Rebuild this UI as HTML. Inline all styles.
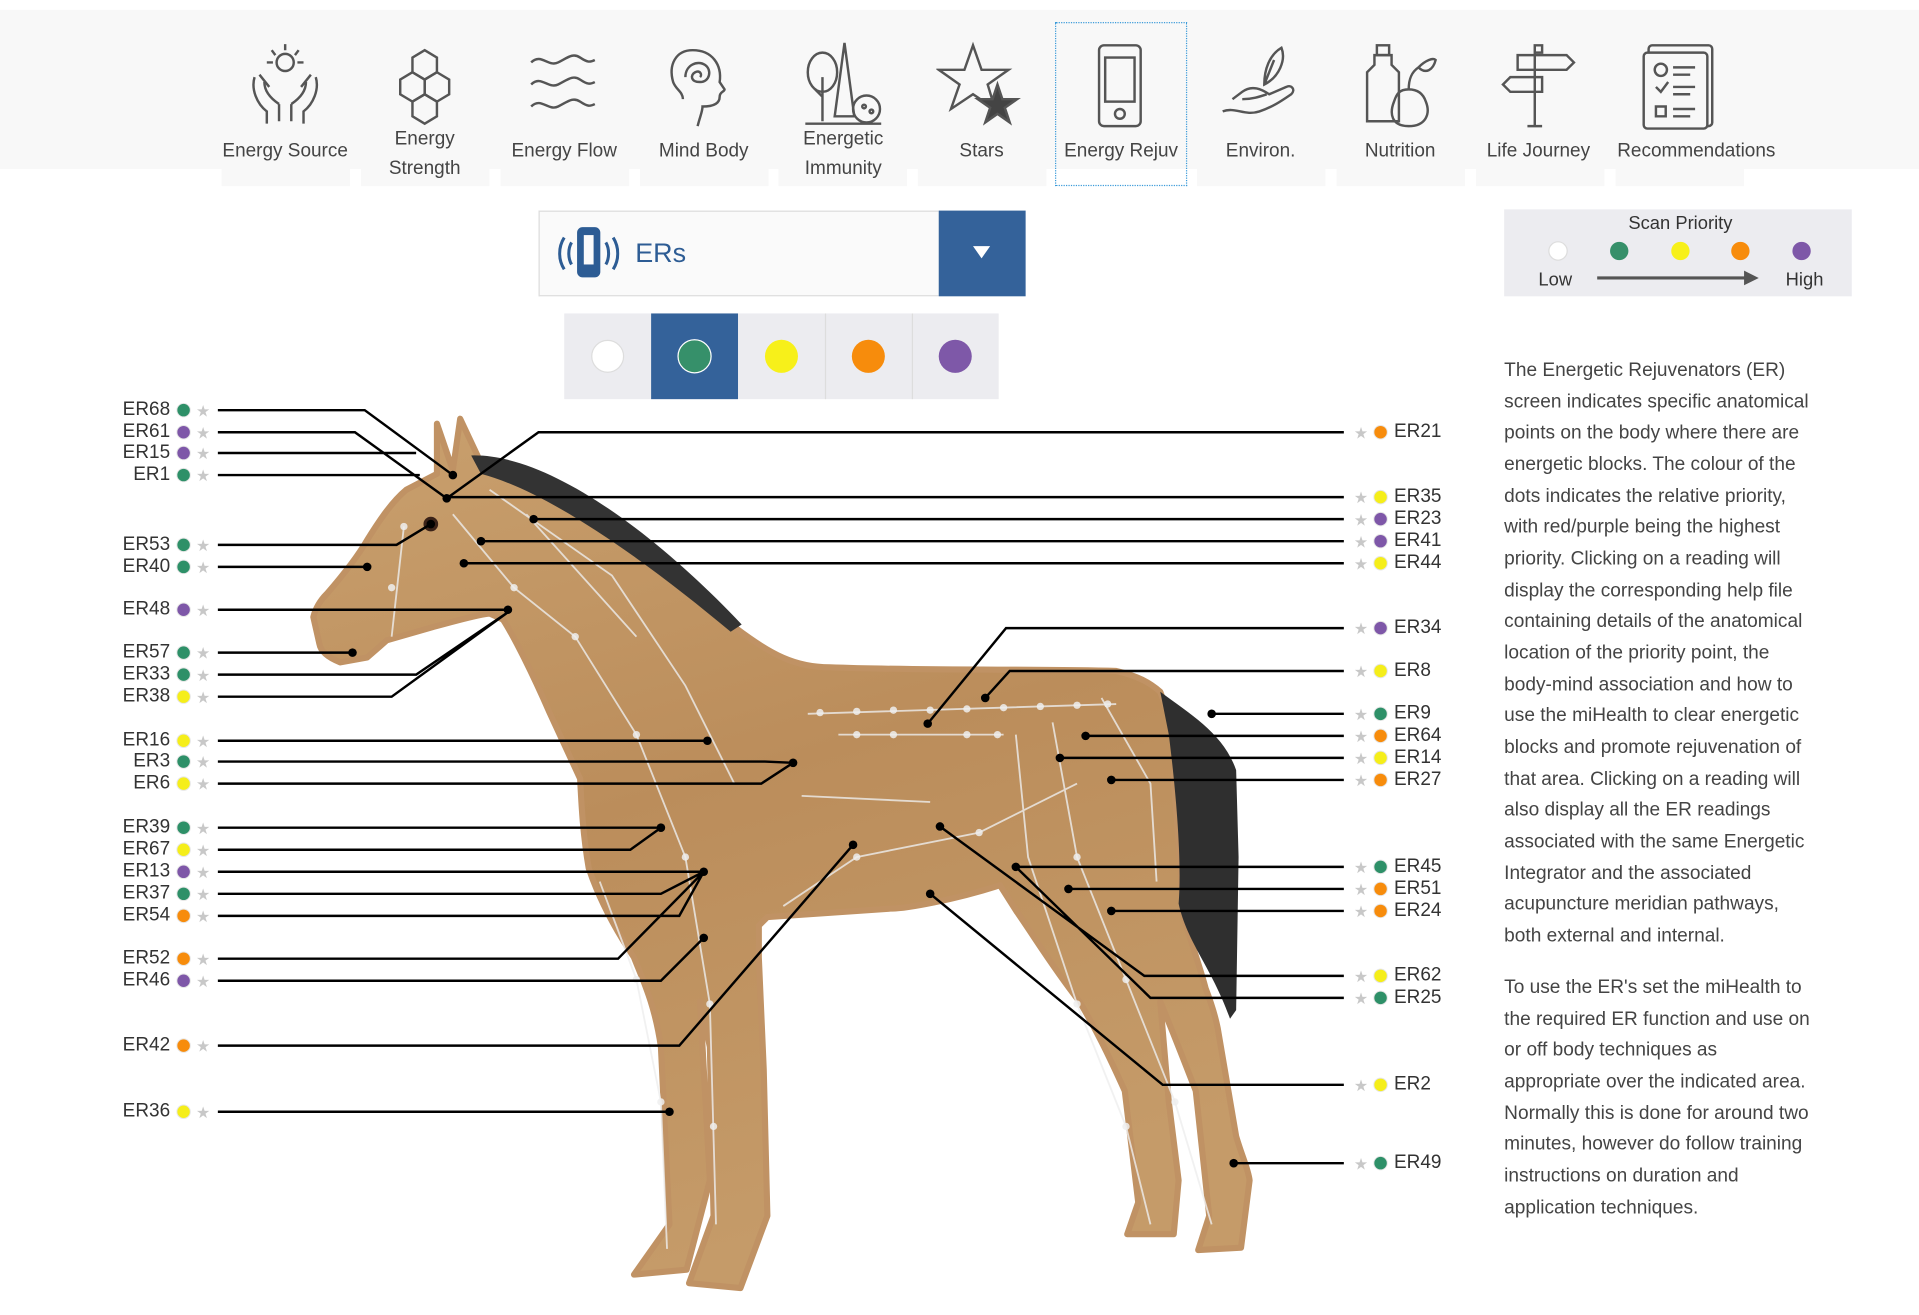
<!DOCTYPE html>
<html><head><meta charset="utf-8"><style>
html,body{margin:0;padding:0;background:#fff;overflow:hidden}
body{width:1919px;height:1315px}
#w{position:absolute;left:0;top:0;width:1568px;height:1074px;transform-origin:0 0;transform:scale(1.2239,1.2244);font-family:"Liberation Sans",sans-serif;color:#444}
.band{position:absolute;left:0;top:8px;width:1568px;height:130px;background:#f8f8f8}
.tab{position:absolute;top:138px;height:14px;background:#f8f8f8}
.lbl{position:absolute;font-size:15.5px;color:#444;text-align:center;width:130px;line-height:24px}
.icon{position:absolute;top:33px;width:74px;height:74px}
.para{position:absolute;left:1229px;font-size:15.6px;line-height:25.65px;color:#444;white-space:nowrap}
</style></head><body><div id="w">
<div class="band"></div>
<div class="tab" style="left:181px;width:105px"></div>
<div class="tab" style="left:295px;width:105px"></div>
<div class="tab" style="left:409px;width:105px"></div>
<div class="tab" style="left:523px;width:105px"></div>
<div class="tab" style="left:636px;width:105px"></div>
<div class="tab" style="left:750px;width:105px"></div>
<div class="tab" style="left:978px;width:105px"></div>
<div class="tab" style="left:1092px;width:105px"></div>
<div class="tab" style="left:1206px;width:105px"></div>
<div class="tab" style="left:1320px;width:105px"></div>
<div style="position:absolute;left:862px;top:18px;width:106px;height:132px;border:1.5px dotted #3a9ad9"></div>

<svg class="icon" style="left:196px" viewBox="0 0 74 74" fill="none" stroke="#555" stroke-width="2"><circle cx="37" cy="18" r="7"/><path d="M37 3v5M26 8l3 4M48 8l-3 4M22 18h5M47 18h5"/><path d="M12 30c-3 10 2 22 10 28v10M62 30c3 10-2 22-10 28v10M20 34c0 8 6 14 12 18M54 34c0 8-6 14-12 18M32 52v14M42 52v14"/><path d="M16 28l8 10M58 28l-8 10"/></svg>
<svg class="icon" style="left:310px" viewBox="0 0 74 74" fill="none" stroke="#555" stroke-width="2"><path d="M37 8l10 6v12l-10 6-10-6V14z"/><path d="M27 26l10 6v12l-10 6-10-6V32z"/><path d="M47 26l10 6v12l-10 6-10-6V32z"/><path d="M37 44l10 6v12l-10 6-10-6V50z"/></svg>
<svg class="icon" style="left:424px" viewBox="0 0 74 74" fill="none" stroke="#555" stroke-width="2"><path d="M10 18c8-8 14 4 22 0s12-8 18-4 8 4 12 2"/><path d="M10 36c8-8 14 4 22 0s12-8 18-4 8 4 12 2"/><path d="M10 54c8-8 14 4 22 0s12-8 18-4 8 4 12 2"/></svg>
<svg class="icon" style="left:538px" viewBox="0 0 74 74" fill="none" stroke="#555" stroke-width="2"><path d="M32 70c2-8 4-12 4-16 8 0 14-2 14-8 0-4 4-4 4-6l-4-6c2-14-6-26-22-26C14 8 8 20 12 34c2 6 8 8 8 14"/><path d="M22 30c0-10 10-14 16-10s4 14-4 14-8-6-4-8 6 2 4 4"/></svg>
<svg class="icon" style="left:652px" viewBox="0 0 74 74" fill="none" stroke="#555" stroke-width="2"><ellipse cx="20" cy="26" rx="12" ry="16"/><path d="M20 30v36M14 40l6 6M38 2l-8 60h16z"/><circle cx="56" cy="56" r="11"/><path d="M6 68h62"/><circle cx="54" cy="54" r="1.5"/><circle cx="60" cy="58" r="1.5"/></svg>
<svg class="icon" style="left:765px" viewBox="0 0 74 74" fill="none" stroke="#555" stroke-width="2"><path d="M30 4l7 20h22l-17 12 6 20-18-12-18 12 7-20L2 24h21z"/><path d="M50 36l4 12h12l-10 7 4 12-10-7-10 7 4-12-10-7h12z" fill="#444"/></svg>
<svg class="icon" style="left:878px" viewBox="0 0 74 74" fill="none" stroke="#555" stroke-width="2"><rect x="20" y="4" width="34" height="66" rx="4"/><rect x="25" y="14" width="24" height="36"/><circle cx="37" cy="60" r="4"/></svg>
<svg class="icon" style="left:993px" viewBox="0 0 74 74" fill="none" stroke="#555" stroke-width="2"><path d="M6 58c10-4 18 4 30 0s20-10 26-14c4-4 0-8-4-6l-14 6c-6-4-14-8-22-2l-8 6"/><path d="M22 48c8 0 14-2 20-4"/><path d="M40 36c0-12 4-24 14-30 4 10-2 24-14 30zM40 36l8-20"/></svg>
<svg class="icon" style="left:1107px" viewBox="0 0 74 74" fill="none" stroke="#555" stroke-width="2"><rect x="18" y="4" width="10" height="8"/><path d="M16 12h14v8l6 6v40H10V26l6-6z"/><path d="M44 70c-14 0-16-10-12-20 2-6 4-10 12-10s12 4 14 10c4 10 0 20-14 20zM44 40c0-8 2-14 8-18M52 22c6-6 12-8 14-6-2 8-8 12-14 6z"/></svg>
<svg class="icon" style="left:1220px" viewBox="0 0 74 74" fill="none" stroke="#555" stroke-width="2"><path d="M34 4h6v6h-6zM34 10v60M40 70H28"/><path d="M20 12h40l6 6-6 6H20zM14 30h26v12H14l-6-6z"/></svg>
<svg class="icon" style="left:1335px" viewBox="0 0 74 74" fill="none" stroke="#555" stroke-width="2"><rect x="12" y="4" width="52" height="66" rx="3"/><rect x="8" y="10" width="52" height="62" rx="3" fill="#f8f8f8"/><circle cx="22" cy="24" r="5"/><path d="M32 22h18M32 28h14M18 38l4 4 6-8M32 38h18M32 44h14M18 54h8v8h-8zM32 56h18M32 62h14"/></svg>

<div class="lbl" style="left:168px;top:112px">Energy Source</div>
<div class="lbl" style="left:282px;top:102px">Energy<br>Strength</div>
<div class="lbl" style="left:396px;top:112px">Energy Flow</div>
<div class="lbl" style="left:510px;top:112px">Mind Body</div>
<div class="lbl" style="left:624px;top:102px">Energetic<br>Immunity</div>
<div class="lbl" style="left:737px;top:112px">Stars</div>
<div class="lbl" style="left:851px;top:112px">Energy Rejuv</div>
<div class="lbl" style="left:965px;top:112px">Environ.</div>
<div class="lbl" style="left:1079px;top:112px">Nutrition</div>
<div class="lbl" style="left:1192px;top:112px">Life Journey</div>
<div class="lbl" style="left:1306px;top:112px;width:160px">Recommendations</div>

<div style="position:absolute;left:440px;top:172px;width:326px;height:68px;background:#fafafa;border:1px solid #ddd;border-right:none"></div>
<div style="position:absolute;left:767px;top:172px;width:71px;height:70px;background:#34629a"></div>
<div style="position:absolute;left:795px;top:201px;width:0;height:0;border-left:7px solid transparent;border-right:7px solid transparent;border-top:10px solid #fff"></div>
<svg style="position:absolute;left:456px;top:184px" width="50" height="46" viewBox="0 0 50 46" fill="none" stroke="#2d5c94" stroke-width="3"><rect x="17" y="3" width="16" height="38" rx="3" fill="#2d5c94"/><rect x="21" y="8" width="8" height="24" fill="#fafafa" stroke="none"/><path d="M11 14c-3 5-3 13 0 18M5 10c-5 8-5 18 0 26M39 14c3 5 3 13 0 18M45 10c5 8 5 18 0 26" stroke-width="2.5"/></svg>
<div style="position:absolute;left:519px;top:194px;font-size:22px;color:#2d5c94">ERs</div>

<div style="position:absolute;left:461px;top:256px;width:355px;height:70px;background:#ececf0"></div>
<div style="position:absolute;left:532px;top:256px;width:71px;height:70px;background:#34629a"></div>
<div style="position:absolute;left:674px;top:256px;width:1px;height:70px;background:#ddd"></div>
<div style="position:absolute;left:745px;top:256px;width:1px;height:70px;background:#ddd"></div>
<svg style="position:absolute;left:461px;top:256px" width="355" height="70"><circle cx="35.5" cy="35" r="13" fill="#fff" stroke="#ddd"/><circle cx="106.5" cy="35" r="13.5" fill="#36906a" stroke="#fff" stroke-width="1"/><circle cx="177.5" cy="35" r="13.5" fill="#f7f01a"/><circle cx="248.5" cy="35" r="13.5" fill="#f78c0c"/><circle cx="319.5" cy="35" r="13.5" fill="#7e58a8"/></svg>

<div style="position:absolute;left:1229px;top:171px;width:284px;height:71px;background:#ececf0"></div>
<div style="position:absolute;left:1229px;top:174px;width:288px;text-align:center;font-size:15px;color:#333">Scan Priority</div>
<svg style="position:absolute;left:1229px;top:171px" width="284" height="71"><circle cx="44" cy="34" r="7.5" fill="#fff" stroke="#ddd"/><circle cx="94" cy="34" r="7.5" fill="#36906a"/><circle cx="144" cy="34" r="7.5" fill="#f7f01a"/><circle cx="193" cy="34" r="7.5" fill="#f78c0c"/><circle cx="243" cy="34" r="7.5" fill="#7e58a8"/><path d="M76 56h122" stroke="#555" stroke-width="2.5"/><path d="M196 50l12 6-12 6z" fill="#555"/><text x="28" y="62" font-size="15" fill="#333" font-family="Liberation Sans">Low</text><text x="230" y="62" font-size="15" fill="#333" font-family="Liberation Sans">High</text></svg>

<div class="para" style="top:290px">The Energetic Rejuvenators (ER)<br>screen indicates specific anatomical<br>points on the body where there are<br>energetic blocks. The colour of the<br>dots indicates the relative priority,<br>with red/purple being the highest<br>priority. Clicking on a reading will<br>display the corresponding help file<br>containing details of the anatomical<br>location of the priority point, the<br>body-mind association and how to<br>use the miHealth to clear energetic<br>blocks and promote rejuvenation of<br>that area. Clicking on a reading will<br>also display all the ER readings<br>associated with the same Energetic<br>Integrator and the associated<br>acupuncture meridian pathways,<br>both external and internal.</div>
<div class="para" style="top:794px">To use the ER's set the miHealth to<br>the required ER function and use on<br>or off body techniques as<br>appropriate over the indicated area.<br>Normally this is done for around two<br>minutes, however do follow training<br>instructions on duration and<br>application techniques.</div>

<svg style="position:absolute;left:0;top:0" width="1568" height="1074" viewBox="0 0 1568 1074">
<defs><linearGradient id="g" x1="0" y1="0" x2="0.3" y2="1"><stop offset="0" stop-color="#c9a06e"/><stop offset="0.5" stop-color="#bb8d5b"/><stop offset="1" stop-color="#c59b69"/></linearGradient></defs>
<path fill="url(#g)" stroke="#c09264" stroke-width="5" stroke-linejoin="round" d="M357,346 L370,384 L376,342 L392,376 C440,395 530,450 600,512 C630,535 650,545 678,545 C760,548 850,546 912,548 C930,552 940,558 948,565 C958,590 962,615 959,636 C963,690 966,720 966,745 C975,775 982,795 985,807 C990,820 993,830 995,840 L1010,928 C1015,945 1020,955 1021,964 L1014,1019 L979,1021 L988,993 L977,891 C965,860 955,835 948,818 L955,900 L963,964 L959,1008 L921,1008 L930,982 L919,891 C905,860 895,840 882,818 C860,790 845,765 831,745 L817,723 C780,735 740,742 729,742 L627,749 L620,756 L620,782 L624,873 L627,993 L605,1052 L563,1048 L583,993 L580,855 L572,818 L580,964 L561,1037 L518,1041 L547,1000 L540,855 C535,820 525,800 518,782 C500,755 488,730 481,709 C476,680 475,655 474,636 L449,582 C435,550 420,520 411,506 L400,501 C385,503 370,508 354,512 L316,523 L300,537 L278,541 C268,537 262,532 261,526 L256,504 C258,496 262,490 267,485 C280,470 292,455 300,441 C310,425 320,410 332,400 L357,387 Z"/>
<path fill="#333" d="M385,372 C450,370 540,440 606,510 L597,516 C530,460 450,402 393,387 Z"/>
<path fill="#2f2f2f" d="M948,565 C975,585 1000,600 1010,629 L1012,700 L1010,825 L1005,832 C990,790 970,770 963,738 C966,700 960,640 955,600 Z"/>
<circle cx="352" cy="428" r="6" fill="#3a2218"/>
<g stroke="#eee" stroke-opacity="0.8" stroke-width="1.5" fill="none">
<path d="M660,583 L912,575 M685,600 L820,600 M655,650 L760,655 M330,430 L320,520 M370,420 L420,480 L470,520 L520,600 L560,700 L580,820 L585,1000 M400,400 L500,470 L560,560 L600,640 M430,420 L520,520 M640,740 L700,700 L800,680 L880,640 M860,590 L880,700 L920,800 L960,900 L990,1000 M830,600 L840,700 L880,820 L920,920 L940,1000 M490,720 L520,800 L540,900 L545,1020 M900,570 L940,640 L945,720"/>
</g>
<g fill="#eee" fill-opacity="0.85">
<circle cx="670" cy="582" r="3"/><circle cx="700" cy="581" r="3"/><circle cx="730" cy="580" r="3"/><circle cx="760" cy="580" r="3"/><circle cx="790" cy="579" r="3"/><circle cx="820" cy="578" r="3"/><circle cx="850" cy="577" r="3"/><circle cx="880" cy="576" r="3"/><circle cx="905" cy="575" r="3"/><circle cx="700" cy="600" r="3"/><circle cx="730" cy="600" r="3"/><circle cx="790" cy="600" r="3"/><circle cx="815" cy="600" r="3"/><circle cx="420" cy="480" r="3"/><circle cx="470" cy="520" r="3"/><circle cx="520" cy="600" r="3"/><circle cx="560" cy="700" r="3"/><circle cx="580" cy="820" r="3"/><circle cx="583" cy="920" r="3"/><circle cx="880" cy="700" r="3"/><circle cx="920" cy="800" r="3"/><circle cx="960" cy="900" r="3"/><circle cx="880" cy="820" r="3"/><circle cx="920" cy="920" r="3"/><circle cx="520" cy="800" r="3"/><circle cx="540" cy="900" r="3"/><circle cx="700" cy="700" r="3"/><circle cx="800" cy="680" r="3"/><circle cx="320" cy="480" r="3"/><circle cx="330" cy="430" r="3"/>
</g>
<g stroke="#000" stroke-width="2" fill="none">
<path d="M178,335H298L370,388M178,353H290L365,407M178,370H340M178,388H343M178,445H324L352,428M178,463H300M178,498H415M178,533H288M178,551H340L415,500M178,569H320L415,500M178,605H578M178,622H625L648,623M178,640H622L648,623M178,676H540M178,694H515L540,676M178,712H575M178,730H540L575,712M178,748H555L575,712M178,783H505L575,712M178,801H540L575,766M178,854H555L697,690M178,908H547"/>
<path d="M1098,353H440L365,407M1098,406H365M1098,424H436M1098,442H393M1098,460H379M1098,513H822L758,591M1098,548H825L805,570M1098,583H990M1098,601H887M1098,619H866M1098,637H908M1098,708H830M1098,726H873M1098,744H908M1098,797H935L768,675M1098,815H940L830,708M1098,886H950L760,730M1098,950H1008"/>
</g>
<g fill="#000">
<circle cx="370" cy="388" r="3.5"/><circle cx="365" cy="407" r="3.5"/><circle cx="352" cy="428" r="3.5"/><circle cx="300" cy="463" r="3.5"/><circle cx="415" cy="498" r="3.5"/><circle cx="288" cy="533" r="3.5"/><circle cx="578" cy="605" r="3.5"/><circle cx="648" cy="623" r="3.5"/><circle cx="540" cy="676" r="3.5"/><circle cx="575" cy="712" r="3.5"/><circle cx="575" cy="766" r="3.5"/><circle cx="697" cy="690" r="3.5"/><circle cx="547" cy="908" r="3.5"/><circle cx="436" cy="424" r="3.5"/><circle cx="393" cy="442" r="3.5"/><circle cx="379" cy="460" r="3.5"/><circle cx="758" cy="591" r="3.5"/><circle cx="805" cy="570" r="3.5"/><circle cx="990" cy="583" r="3.5"/><circle cx="887" cy="601" r="3.5"/><circle cx="866" cy="619" r="3.5"/><circle cx="908" cy="637" r="3.5"/><circle cx="830" cy="708" r="3.5"/><circle cx="873" cy="726" r="3.5"/><circle cx="908" cy="744" r="3.5"/><circle cx="768" cy="675" r="3.5"/><circle cx="760" cy="730" r="3.5"/><circle cx="1008" cy="950" r="3.5"/>
</g>
<g font-family="Liberation Sans" font-size="15.5" fill="#333" text-anchor="end">
<text x="139" y="339">ER68</text><text x="139" y="357">ER61</text><text x="139" y="374">ER15</text><text x="139" y="392">ER1</text><text x="139" y="449">ER53</text><text x="139" y="467">ER40</text><text x="139" y="502">ER48</text><text x="139" y="537">ER57</text><text x="139" y="555">ER33</text><text x="139" y="573">ER38</text><text x="139" y="609">ER16</text><text x="139" y="626">ER3</text><text x="139" y="644">ER6</text><text x="139" y="680">ER39</text><text x="139" y="698">ER67</text><text x="139" y="716">ER13</text><text x="139" y="734">ER37</text><text x="139" y="752">ER54</text><text x="139" y="787">ER52</text><text x="139" y="805">ER46</text><text x="139" y="858">ER42</text><text x="139" y="912">ER36</text>
</g>
<g font-family="Liberation Sans" font-size="15.5" fill="#333">
<text x="1139" y="357">ER21</text><text x="1139" y="410">ER35</text><text x="1139" y="428">ER23</text><text x="1139" y="446">ER41</text><text x="1139" y="464">ER44</text><text x="1139" y="517">ER34</text><text x="1139" y="552">ER8</text><text x="1139" y="587">ER9</text><text x="1139" y="605">ER64</text><text x="1139" y="623">ER14</text><text x="1139" y="641">ER27</text><text x="1139" y="712">ER45</text><text x="1139" y="730">ER51</text><text x="1139" y="748">ER24</text><text x="1139" y="801">ER62</text><text x="1139" y="819">ER25</text><text x="1139" y="890">ER2</text><text x="1139" y="954">ER49</text>
</g>
<g font-family="DejaVu Sans" font-size="13" fill="#c8c8c8" text-anchor="middle">
<text x="166" y="340">★</text><text x="166" y="358">★</text><text x="166" y="375">★</text><text x="166" y="393">★</text><text x="166" y="450">★</text><text x="166" y="468">★</text><text x="166" y="503">★</text><text x="166" y="538">★</text><text x="166" y="556">★</text><text x="166" y="574">★</text><text x="166" y="610">★</text><text x="166" y="627">★</text><text x="166" y="645">★</text><text x="166" y="681">★</text><text x="166" y="699">★</text><text x="166" y="717">★</text><text x="166" y="735">★</text><text x="166" y="753">★</text><text x="166" y="788">★</text><text x="166" y="806">★</text><text x="166" y="859">★</text><text x="166" y="913">★</text>
<text x="1112" y="358">★</text><text x="1112" y="411">★</text><text x="1112" y="429">★</text><text x="1112" y="447">★</text><text x="1112" y="465">★</text><text x="1112" y="518">★</text><text x="1112" y="553">★</text><text x="1112" y="588">★</text><text x="1112" y="606">★</text><text x="1112" y="624">★</text><text x="1112" y="642">★</text><text x="1112" y="713">★</text><text x="1112" y="731">★</text><text x="1112" y="749">★</text><text x="1112" y="802">★</text><text x="1112" y="820">★</text><text x="1112" y="891">★</text><text x="1112" y="955">★</text>
</g>
<g stroke="#e6e6e6" stroke-width="0.8">
<circle cx="150" cy="335" r="5.5" fill="#2e9068"/><circle cx="150" cy="353" r="5.5" fill="#7e57a8"/><circle cx="150" cy="370" r="5.5" fill="#7e57a8"/><circle cx="150" cy="388" r="5.5" fill="#2e9068"/><circle cx="150" cy="445" r="5.5" fill="#2e9068"/><circle cx="150" cy="463" r="5.5" fill="#2e9068"/><circle cx="150" cy="498" r="5.5" fill="#7e57a8"/><circle cx="150" cy="533" r="5.5" fill="#2e9068"/><circle cx="150" cy="551" r="5.5" fill="#2e9068"/><circle cx="150" cy="569" r="5.5" fill="#f5ee1a"/><circle cx="150" cy="605" r="5.5" fill="#f5ee1a"/><circle cx="150" cy="622" r="5.5" fill="#2e9068"/><circle cx="150" cy="640" r="5.5" fill="#f5ee1a"/><circle cx="150" cy="676" r="5.5" fill="#2e9068"/><circle cx="150" cy="694" r="5.5" fill="#f5ee1a"/><circle cx="150" cy="712" r="5.5" fill="#7e57a8"/><circle cx="150" cy="730" r="5.5" fill="#2e9068"/><circle cx="150" cy="748" r="5.5" fill="#f78c0c"/><circle cx="150" cy="783" r="5.5" fill="#f78c0c"/><circle cx="150" cy="801" r="5.5" fill="#7e57a8"/><circle cx="150" cy="854" r="5.5" fill="#f78c0c"/><circle cx="150" cy="908" r="5.5" fill="#f5ee1a"/>
<circle cx="1128" cy="353" r="5.5" fill="#f78c0c"/><circle cx="1128" cy="406" r="5.5" fill="#f5ee1a"/><circle cx="1128" cy="424" r="5.5" fill="#7e57a8"/><circle cx="1128" cy="442" r="5.5" fill="#7e57a8"/><circle cx="1128" cy="460" r="5.5" fill="#f5ee1a"/><circle cx="1128" cy="513" r="5.5" fill="#7e57a8"/><circle cx="1128" cy="548" r="5.5" fill="#f5ee1a"/><circle cx="1128" cy="583" r="5.5" fill="#2e9068"/><circle cx="1128" cy="601" r="5.5" fill="#f78c0c"/><circle cx="1128" cy="619" r="5.5" fill="#f5ee1a"/><circle cx="1128" cy="637" r="5.5" fill="#f78c0c"/><circle cx="1128" cy="708" r="5.5" fill="#2e9068"/><circle cx="1128" cy="726" r="5.5" fill="#f78c0c"/><circle cx="1128" cy="744" r="5.5" fill="#f78c0c"/><circle cx="1128" cy="797" r="5.5" fill="#f5ee1a"/><circle cx="1128" cy="815" r="5.5" fill="#2e9068"/><circle cx="1128" cy="886" r="5.5" fill="#f5ee1a"/><circle cx="1128" cy="950" r="5.5" fill="#2e9068"/>
</g>
</svg>
</div></body></html>
